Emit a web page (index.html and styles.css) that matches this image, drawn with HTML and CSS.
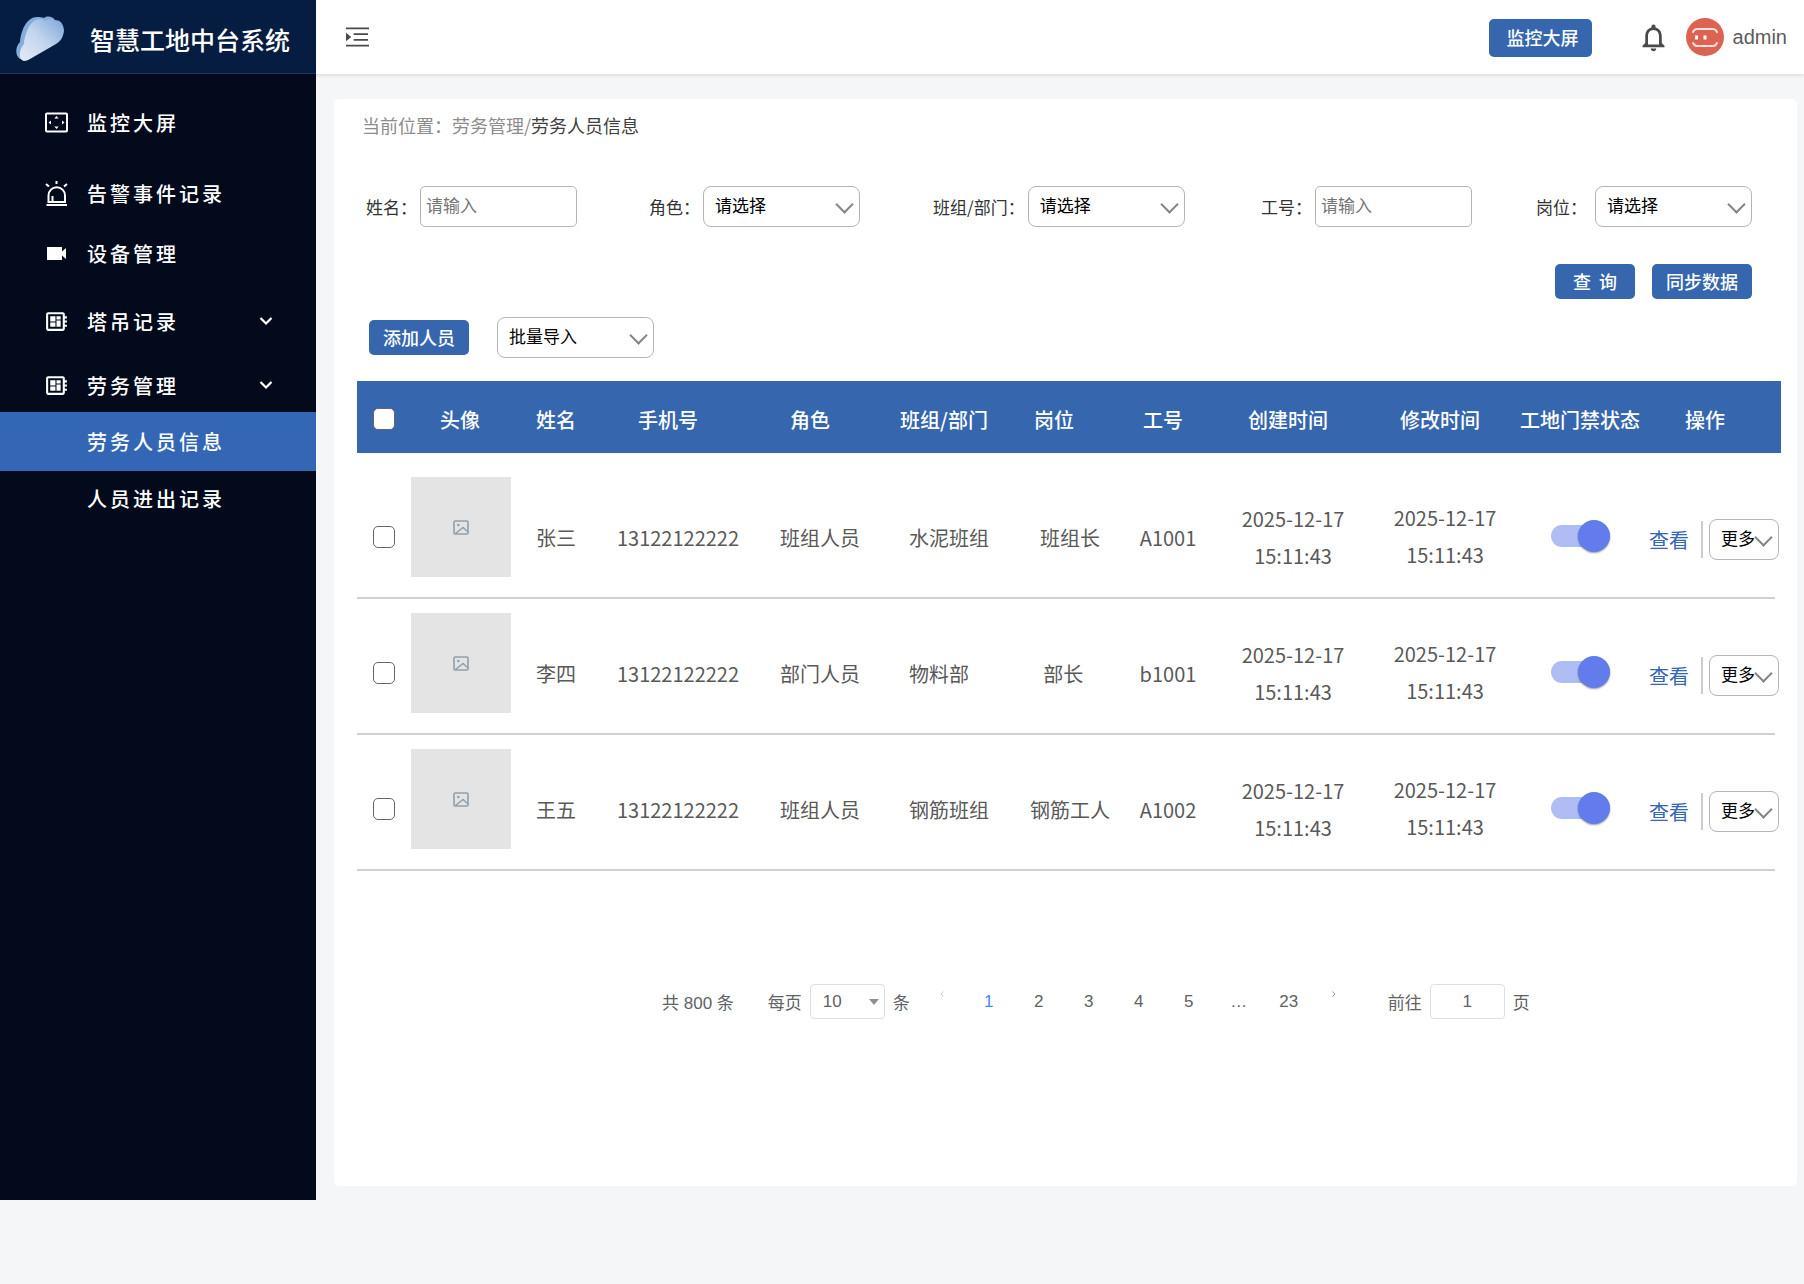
FILE: index.html
```html
<!DOCTYPE html>
<html lang="zh-CN">
  <head>
    <meta charset="UTF-8" />
    <meta name="viewport" content="width=device-width, initial-scale=1.0" />
    <title>智慧工地中台系统</title>
    <link rel="stylesheet" href="styles.css">
  </head>
  <body>
    <!-- shared icons -->
    <svg class="sprite" aria-hidden="true">
      <symbol id="icon-board" viewBox="0 0 24 24">
        <path fill="currentColor" d="M22 9V7h-2V5c0-1.1-.9-2-2-2H4c-1.1 0-2 .9-2 2v14c0 1.1.9 2 2 2h14c1.1 0 2-.9 2-2v-2h2v-2h-2v-2h2v-2h-2V9h2zm-4 10H4V5h14v14zM6 13h5v4H6v-4zm6-6h4v3h-4V7zM6 7h5v5H6V7zm6 4h4v6h-4v-6z" />
      </symbol>
      <symbol id="icon-down" viewBox="0 0 14 10">
        <path fill="none" stroke="currentColor" stroke-width="2.2" d="M1.5 2l5.5 5.5L12.5 2" />
      </symbol>
      <symbol id="icon-image" viewBox="0 0 16 15">
        <g fill="none" stroke="currentColor" stroke-width="1.6">
          <rect x="1" y="1" width="14" height="13" rx="1" />
          <path d="M2.5 13.5L10 7.5l5 4.5" />
        </g>
        <circle cx="5.3" cy="5" r="1.3" fill="currentColor" />
      </symbol>
    </svg>

    <div class="layout">
      <aside class="sidebar">
        <div class="brand">
          <svg class="brand-logo" viewBox="0 0 48 45" aria-hidden="true">
            <defs>
              <linearGradient id="cloud" x1="0" y1="1" x2="1" y2="0">
                <stop offset="0" stop-color="#e3ecf7" />
                <stop offset="0.5" stop-color="#c3d5ee" />
                <stop offset="1" stop-color="#7ba6da" />
              </linearGradient>
            </defs>
            <path fill="#86add9" d="M4 43C-1 40-1 31 4 26C5 14 11 1 21 1c3 0 5 0 7 1c4-3 9-1 11 2c5 0 8 3 8 8L20 36L9 43z" />
            <path fill="url(#cloud)" d="M8 45c-6-1-5-12 0-17C9 16 15 3 24 3c3 0 4 1 5 2c4-3 9-2 11 1c6 0 8 4 8 9c-1 6-3 10-8 13L14 43c-2 1-4 2-6 2z" />
          </svg>
          <h1 class="brand-name">智慧工地中台系统</h1>
        </div>
        <ul class="menu">
          <li>
            <a href="#" class="menu-item">
              <svg class="menu-icon" viewBox="0 0 25 25" aria-hidden="true">
                <rect x="2" y="3.5" width="21" height="18" rx="1" fill="none" stroke="currentColor" stroke-width="2" />
                <path fill="currentColor" d="M12.5 6l2.2 2.5h-4.4zM12.5 19l2.2-2.5h-4.4zM4.5 12.5L7 10.500v4zM20.5 12.5L18 10.500v4z" />
              </svg>
              监控大屏
            </a>
          </li>
          <li>
            <a href="#" class="menu-item">
              <svg class="menu-icon" viewBox="0 0 25 25" aria-hidden="true">
                <path fill="none" stroke="currentColor" stroke-width="2" d="M2.5 24h20.5M4.5 21v-6.5a8 8 0 0 1 16.5 0V21zM8.5 20v-5M12.5 0v3M2 3l3 2.5M23 3l-3 2.5" />
              </svg>
              告警事件记录
            </a>
          </li>
          <li>
            <a href="#" class="menu-item">
              <svg class="menu-icon" viewBox="0 0 25 25" aria-hidden="true">
                <path fill="currentColor" d="M4 6h13c1 0 1 0 1 1v3.5L22 7v11l-4-3.5V18c0 1 0 1-1 1H4c-1 0-1 0-1-1V7c0-1 0-1 1-1z" />
              </svg>
              设备管理
            </a>
          </li>
          <li>
            <a href="#" class="menu-item">
              <svg class="menu-icon" aria-hidden="true"><use href="#icon-board" /></svg>
              塔吊记录
              <svg class="menu-arrow" aria-hidden="true"><use href="#icon-down" /></svg>
            </a>
          </li>
          <li>
            <a href="#" class="menu-item">
              <svg class="menu-icon" aria-hidden="true"><use href="#icon-board" /></svg>
              劳务管理
              <svg class="menu-arrow" aria-hidden="true"><use href="#icon-down" /></svg>
            </a>
            <ul class="submenu">
              <li><a href="#" class="submenu-item active">劳务人员信息</a></li>
              <li><a href="#" class="submenu-item">人员进出记录</a></li>
            </ul>
          </li>
        </ul>
      </aside>

      <div class="main">
        <header class="topbar">
          <button class="icon-btn" aria-label="展开菜单">
            <svg class="fold-icon" viewBox="0 0 24 20" aria-hidden="true">
              <path stroke="currentColor" stroke-width="2" d="M0 1h24M8 7h15M8 13h15M0 19h24" />
              <path fill="currentColor" d="M0 5.5L5.5 10L0 14.500z" />
            </svg>
          </button>
          <div class="topbar-right">
            <button class="btn btn-screen">监控大屏</button>
            <button class="icon-btn" aria-label="通知">
              <svg class="bell-icon" viewBox="0 0 24 24" aria-hidden="true">
                <path fill="currentColor" d="M12 22c1.1 0 2-.9 2-2h-4c0 1.1.9 2 2 2zm6-6v-5c0-3.07-1.63-5.64-4.5-6.32V4c0-.83-.67-1.5-1.5-1.5s-1.5.67-1.5 1.5v.68C7.64 5.36 6 7.92 6 11v5l-2 2v1h16v-1l-2-2zm-2 1H8v-6c0-2.48 1.51-4.5 4-4.5s4 2.02 4 4.5v6z" />
              </svg>
            </button>
            <a href="#" class="user">
              <svg class="avatar" viewBox="0 0 38 38" aria-hidden="true">
                <circle cx="19" cy="19" r="19" fill="#dc6351" />
                <path fill="none" stroke="#fbe3df" stroke-width="2" stroke-linecap="round" d="M7 14c1-2 2-3 4-3h16c2 0 3 1 4 3M7 25c1 2 2 3 4 3h16c2 0 3-1 4-3" />
                <path fill="#fff" d="M9 17.5h3v4H9zM17.5 17.5h3v4h-3z" />
              </svg>
              admin
            </a>
          </div>
        </header>

        <main class="card">
          <nav class="breadcrumb">当前位置：劳务管理/<span>劳务人员信息</span></nav>

          <form class="filters">
            <div class="field">
              <label for="name">姓名：</label>
              <input type="text" id="name" class="input" placeholder="请输入" />
            </div>
            <div class="field">
              <label for="role">角色：</label>
              <span class="select-wrap">
                <select id="role" class="select"><option>请选择</option></select>
              </span>
            </div>
            <div class="field">
              <label for="team">班组/部门：</label>
              <span class="select-wrap">
                <select id="team" class="select"><option>请选择</option></select>
              </span>
            </div>
            <div class="field">
              <label for="number">工号：</label>
              <input type="text" id="number" class="input" placeholder="请输入" />
            </div>
            <div class="field">
              <label for="post">岗位：</label>
              <span class="select-wrap">
                <select id="post" class="select"><option>请选择</option></select>
              </span>
            </div>
          </form>

          <div class="filter-actions">
            <button class="btn btn-query">查&nbsp; 询</button>
            <button class="btn">同步数据</button>
          </div>

          <div class="toolbar">
            <button class="btn">添加人员</button>
            <span class="select-wrap">
              <select class="select" aria-label="批量导入"><option>批量导入</option></select>
            </span>
          </div>

          <table class="table">
            <colgroup>
              <col class="col-check" />
              <col class="col-photo" />
              <col class="col-name" />
              <col class="col-phone" />
              <col class="col-role" />
              <col class="col-team" />
              <col class="col-post" />
              <col class="col-number" />
              <col class="col-created" />
              <col class="col-updated" />
              <col class="col-status" />
              <col class="col-ops" />
            </colgroup>
            <thead>
              <tr>
                <th><input type="checkbox" class="check" aria-label="全选" /></th>
                <th>头像</th>
                <th>姓名</th>
                <th class="shift-md">手机号</th>
                <th class="shift-md">角色</th>
                <th class="shift-sm">班组/部门</th>
                <th class="shift-lg">岗位</th>
                <th class="shift-sm">工号</th>
                <th class="shift-sm">创建时间</th>
                <th class="shift-sm">修改时间</th>
                <th>工地门禁状态</th>
                <th class="shift-md">操作</th>
              </tr>
            </thead>
            <tbody>
              <tr>
                <td><input type="checkbox" class="check" aria-label="选择张三" /></td>
                <td class="cell-photo"><div class="photo"><svg aria-hidden="true"><use href="#icon-image" /></svg></div></td>
                <td>张三</td>
                <td>13122122222</td>
                <td>班组人员</td>
                <td class="cell-team">水泥班组</td>
                <td>班组长</td>
                <td>A1001</td>
                <td>2025-12-17<br />15:11:43</td>
                <td class="cell-updated">2025-12-17<br />15:11:43</td>
                <td class="cell-status"><input type="checkbox" class="switch" aria-label="张三门禁状态" checked /></td>
                <td>
                  <div class="ops">
                    <a href="#">查看</a>
                    <span class="select-wrap more">
                      <select class="select" aria-label="更多"><option>更多</option></select>
                    </span>
                  </div>
                </td>
              </tr>
              <tr>
                <td><input type="checkbox" class="check" aria-label="选择李四" /></td>
                <td class="cell-photo"><div class="photo"><svg aria-hidden="true"><use href="#icon-image" /></svg></div></td>
                <td>李四</td>
                <td>13122122222</td>
                <td>部门人员</td>
                <td class="cell-team">物料部</td>
                <td>部长&nbsp;&nbsp;&nbsp;</td>
                <td>b1001</td>
                <td>2025-12-17<br />15:11:43</td>
                <td class="cell-updated">2025-12-17<br />15:11:43</td>
                <td class="cell-status"><input type="checkbox" class="switch" aria-label="李四门禁状态" checked /></td>
                <td>
                  <div class="ops">
                    <a href="#">查看</a>
                    <span class="select-wrap more">
                      <select class="select" aria-label="更多"><option>更多</option></select>
                    </span>
                  </div>
                </td>
              </tr>
              <tr>
                <td><input type="checkbox" class="check" aria-label="选择王五" /></td>
                <td class="cell-photo"><div class="photo"><svg aria-hidden="true"><use href="#icon-image" /></svg></div></td>
                <td>王五</td>
                <td>13122122222</td>
                <td>班组人员</td>
                <td class="cell-team">钢筋班组</td>
                <td>钢筋工人</td>
                <td>A1002</td>
                <td>2025-12-17<br />15:11:43</td>
                <td class="cell-updated">2025-12-17<br />15:11:43</td>
                <td class="cell-status"><input type="checkbox" class="switch" aria-label="王五门禁状态" checked /></td>
                <td>
                  <div class="ops">
                    <a href="#">查看</a>
                    <span class="select-wrap more">
                      <select class="select" aria-label="更多"><option>更多</option></select>
                    </span>
                  </div>
                </td>
              </tr>
            </tbody>
          </table>

          <div class="pagination">
            <span class="total">共 800 条</span>
            <label for="size">每页</label>
            <span class="size-wrap">
              <select id="size" class="size"><option>10</option></select>
            </span>
            <span>条</span>
            <div class="pages">
              <button class="page-arrow prev" aria-label="上一页">
                <svg viewBox="0 0 4 6" aria-hidden="true"><path fill="none" stroke="currentColor" stroke-width="0.8" d="M3.5 0.5L1 3l2.5 2.5" /></svg>
              </button>
              <button class="page current">1</button>
              <button class="page">2</button>
              <button class="page">3</button>
              <button class="page">4</button>
              <button class="page">5</button>
              <span class="page">…</span>
              <button class="page">23</button>
              <button class="page-arrow" aria-label="下一页">
                <svg viewBox="0 0 4 6" aria-hidden="true"><path fill="none" stroke="currentColor" stroke-width="0.8" d="M0.5 0.5L3 3L0.5 5.5" /></svg>
              </button>
            </div>
            <label for="goto">前往</label>
            <input type="text" id="goto" class="goto" value="1" />
            <span>页</span>
          </div>
        </main>
      </div>
    </div>
  </body>
</html>
```
FILE: styles.css
```css
* {
  box-sizing: border-box;
  margin: 0;
  padding: 0;
}
body {
  font-family: "Noto Sans CJK SC", sans-serif;
  font-size: 18px;
  color: #333;
  background: #f4f6f8;
}
ul {
  list-style: none;
}
a {
  text-decoration: none;
}
button,
input,
select {
  font-family: inherit;
}
.sprite {
  display: none;
}
.layout {
  display: grid;
  grid-template-columns: 316px 1fr;
}

/* sidebar */
.sidebar {
  background: #020a1c;
  color: #fff;
}
.brand {
  display: flex;
  align-items: center;
  gap: 26px;
  height: 74px;
  padding: 4px 16px 0;
  background: #061d42;
  border-bottom: 1px solid #24335c;
}
.brand-logo {
  width: 48px;
  height: 45px;
  flex: none;
}
.brand-name {
  font-size: 25px;
  font-weight: 500;
  line-height: 36px;
  white-space: nowrap;
}
.menu {
  display: flex;
  flex-direction: column;
  padding-top: 23px;
}
.menu > li:nth-child(2) {
  margin-top: 19px;
}
.menu > li:nth-child(3) {
  margin-top: 8px;
}
.menu > li:nth-child(4) {
  margin-top: 16px;
}
.menu > li:nth-child(5) {
  margin-top: 12px;
}
.menu-item,
.submenu-item {
  display: flex;
  align-items: center;
  color: #fff;
  font-size: 20px;
  font-weight: 500;
  letter-spacing: 3px;
}
.menu-item {
  height: 52px;
  padding: 0 43px 2px 44px;
}
.menu-icon {
  width: 25px;
  height: 25px;
  margin-right: 18px;
}
.menu-arrow {
  width: 14px;
  height: 10px;
  margin-left: auto;
}
.submenu-item {
  height: 55px;
  padding-left: 87px;
}
.submenu-item.active {
  height: 59px;
  background: #3466b6;
}

/* top bar */
.main {
  display: flex;
  flex-direction: column;
  min-width: 0;
}
.topbar {
  display: flex;
  align-items: center;
  justify-content: space-between;
  height: 74px;
  padding: 0 17px 0 30px;
  background: #fff;
  box-shadow: 0 1px 4px rgba(0, 21, 41, 0.15);
}
.topbar-right {
  display: flex;
  align-items: center;
}
.icon-btn {
  display: flex;
  background: none;
  border: none;
  color: #4a4a4a;
  cursor: pointer;
}
.fold-icon {
  width: 23px;
  height: 20px;
}
.bell-icon {
  width: 33px;
  height: 33px;
}
.btn {
  height: 35px;
  padding: 0 14px 2px;
  border: none;
  border-radius: 5px;
  background: #3566ae;
  color: #fff;
  font-size: 18px;
  font-weight: 500;
  line-height: 26px;
  white-space: nowrap;
  cursor: pointer;
}
.btn-screen {
  height: 38px;
  margin: 2px 45px 0 0;
  padding: 0 13px 2px 18px;
}
.user {
  display: flex;
  align-items: center;
  gap: 9px;
  margin-left: 16px;
  color: #5c5c5c;
  font-family: "Liberation Sans", sans-serif;
  font-size: 20px;
}
.avatar {
  width: 38px;
  height: 38px;
}

/* content card */
.card {
  margin: 25px 7px 14px 18px;
  padding: 12px 16px 167px 23px;
  background: #fff;
  border-radius: 5px;
}
.breadcrumb {
  padding-left: 5px;
  color: #8c8c8c;
  line-height: 28px;
}
.breadcrumb span {
  color: #404040;
}
.filters {
  display: grid;
  grid-template-columns: 283fr 284fr 328fr 275fr 216fr;
  margin-top: 47px;
  padding: 0 29px 0 9px;
}
.field {
  display: flex;
  align-items: center;
  gap: 3px;
  font-size: 17px;
  white-space: nowrap;
}
.field:last-child {
  justify-content: space-between;
}
.input,
.select {
  width: 157px;
  height: 41px;
  border: 1px solid #b5b5b5;
  background: #fff;
  font-size: 17px;
}
.input {
  padding: 0 5px 4px;
  border-radius: 5px;
}
.input::placeholder {
  color: #757575;
}
.select {
  appearance: none;
  padding: 0 11px 4px;
  border-radius: 8px;
  color: #000;
}
.select-wrap {
  position: relative;
  display: inline-flex;
}
.select-wrap::after {
  content: "";
  position: absolute;
  top: 12px;
  right: 9px;
  width: 11px;
  height: 11px;
  border: solid #858585;
  border-width: 0 2px 2px 0;
  transform: rotate(45deg);
  pointer-events: none;
}
.filter-actions {
  display: flex;
  justify-content: flex-end;
  gap: 17px;
  margin-top: 37px;
  padding-right: 29px;
}
.btn-query {
  width: 80px;
}
.toolbar {
  display: flex;
  align-items: center;
  gap: 28px;
  margin-top: 18px;
  padding-left: 12px;
}

/* staff table */
.table {
  width: 100%;
  margin-top: 23px;
  table-layout: fixed;
  border-collapse: collapse;
  font-size: 20px;
  line-height: 37px;
  text-align: center;
  white-space: nowrap;
}
.col-check {
  width: 54px;
}
.col-photo {
  width: 98px;
}
.col-name {
  width: 94px;
}
.col-phone {
  width: 150px;
}
.col-role {
  width: 134px;
}
.col-team {
  width: 124px;
}
.col-post {
  width: 118px;
}
.col-number {
  width: 78px;
}
.col-created {
  width: 172px;
}
.col-updated {
  width: 132px;
}
.col-status {
  width: 138px;
}
.col-ops {
  width: 132px;
}
.table th {
  height: 72px;
  padding-top: 4px;
  background: #3566ae;
  color: #fff;
  font-weight: 500;
}
.table .shift-sm {
  padding-right: 10px;
}
.table .shift-md {
  padding-right: 20px;
}
.table .shift-lg {
  padding-right: 32px;
}
/* row line stops short of the header's right edge */
.table tbody tr {
  background: linear-gradient(#d0d0d0, #d0d0d0) no-repeat left bottom / calc(100% - 6px) 2px;
}
.table td {
  padding: 35px 0 23px;
  color: #595959;
}
.table .cell-photo {
  padding: 14px 0 22px;
}
.table .cell-team {
  padding-left: 22px;
  text-align: left;
}
.table .cell-updated,
.table .cell-status {
  padding-bottom: 26px;
}
.table tbody tr:first-child td {
  padding-top: 45px;
}
.table tbody tr:first-child .cell-photo {
  padding-top: 24px;
}
.check {
  appearance: none;
  display: block;
  width: 22px;
  height: 22px;
  margin: 0 auto;
  border: 1px solid #666;
  border-radius: 5px;
  background: #fff;
}
.check:checked {
  background: #3566ae;
}
.photo {
  display: flex;
  align-items: center;
  justify-content: center;
  width: 100px;
  height: 100px;
  background: #e4e4e4;
  color: #90a0ac;
}
.photo svg {
  width: 16px;
  height: 15px;
}
.switch {
  appearance: none;
  display: flex;
  align-items: center;
  width: 59px;
  height: 22px;
  margin: 0 auto;
  border-radius: 11px;
  background: #ccc;
}
.switch::before {
  content: "";
  width: 32px;
  height: 32px;
  flex: none;
  border-radius: 50%;
  background: #fff;
  box-shadow: 0 1px 2px rgba(0, 0, 0, 0.4);
}
.switch:checked {
  justify-content: flex-end;
  background: #b0bdf5;
}
.switch:checked::before {
  background: #627cec;
}
.ops {
  display: flex;
  align-items: center;
  padding-top: 5px;
}
.ops a {
  margin-right: 6px;
  padding-right: 12px;
  border-right: 2px solid #ccc;
  color: #3466b6;
}
.more .select {
  width: 70px;
}

/* pagination */
.pagination {
  display: flex;
  align-items: center;
  margin-top: 113px;
  padding-left: 305px;
  color: #606266;
  font-family: "Liberation Sans", "Noto Sans CJK SC", sans-serif;
  font-size: 17px;
  white-space: nowrap;
}
.total {
  margin-right: 34px;
}
.size-wrap {
  position: relative;
  display: inline-flex;
  margin: 0 8px;
}
.size-wrap::after {
  content: "";
  position: absolute;
  top: 15px;
  right: 6px;
  border: 5px solid transparent;
  border-top: 6px solid #8e9097;
  border-bottom: none;
  pointer-events: none;
}
.size,
.goto {
  width: 75px;
  height: 35px;
  border: 1px solid #dcdfe6;
  border-radius: 4px;
  background: #fff;
  color: #606266;
  font-size: 17px;
}
.size {
  appearance: none;
  padding: 0 12px;
}
.goto {
  margin: 0 8px;
  text-align: center;
}
.pages {
  display: flex;
  align-items: center;
  margin: 0 52px 0 30px;
}
.page {
  width: 50px;
  border: none;
  background: none;
  color: #606266;
  font-size: 17px;
  text-align: center;
  cursor: pointer;
}
.page.current {
  color: #3d8bff;
}
.page-arrow {
  display: flex;
  margin-bottom: 16px;
  padding: 0 0 0 18px;
  border: none;
  background: none;
  color: #777;
}
.page-arrow.prev {
  padding: 0 20px 0 0;
  color: #bbb;
}
.page-arrow svg {
  width: 4px;
  height: 6px;
}
```
